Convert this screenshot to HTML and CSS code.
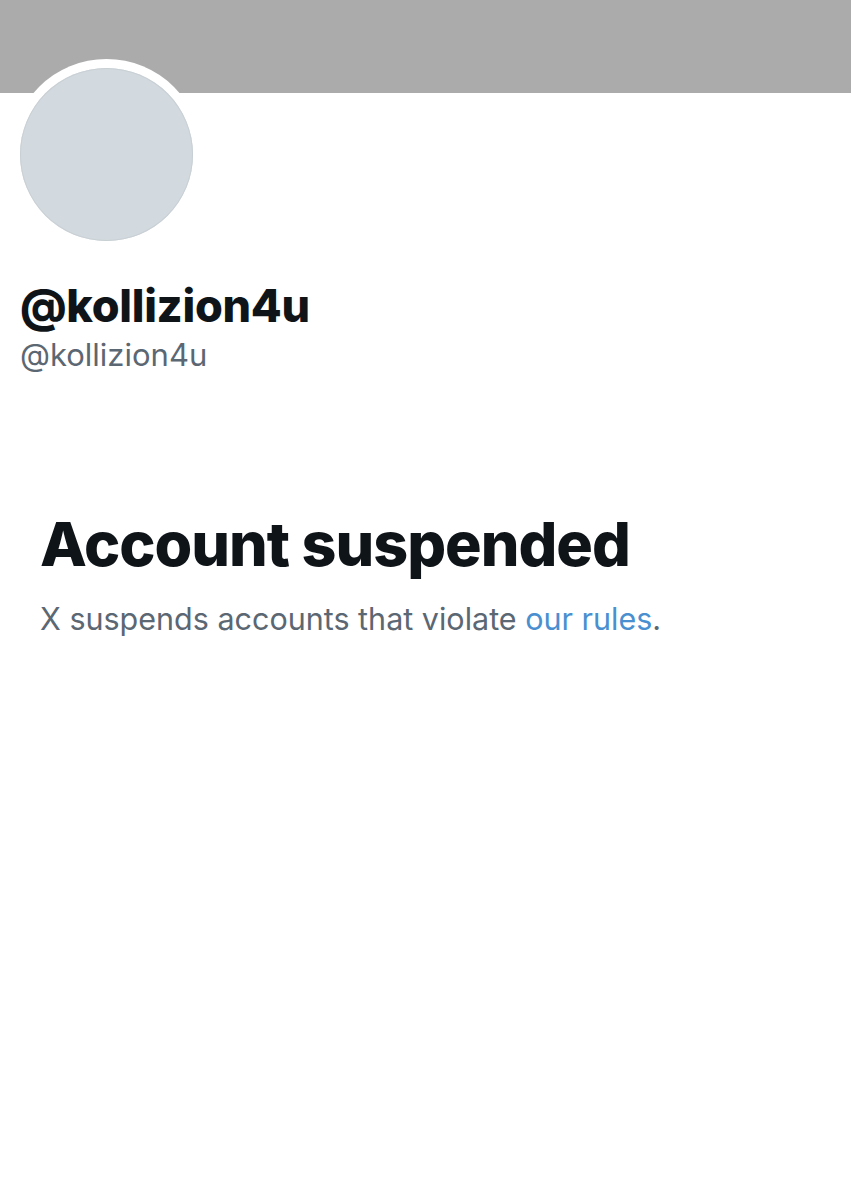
FILE: index.html
```html
<!DOCTYPE html>
<html>
<head>
<meta charset="utf-8">
<link rel="stylesheet" href="styles.css">
</head>
<body>
<div class="page">
  <div class="banner"></div>
  <div class="header">
    <div class="avatar-ring"><div class="avatar"></div></div>
    <div class="name">@kollizion4u</div>
    <div class="handle">@kollizion4u</div>
  </div>
  <div class="notice">
    <div class="title">Account suspended</div>
    <div class="desc">X suspends accounts that violate <a class="link" href="#">our rules</a>.</div>
  </div>
</div>
</body>
</html>
```

FILE: styles.css
```css
html, body { margin: 0; padding: 0; background: #fff; }
.page { width: 851px; height: 1200px; font-family: "Inter", "Liberation Sans", sans-serif; }
.banner { height: 93px; background: #ababab; }
.header { padding: 0 20px; display: flex; flex-direction: column; }
.avatar-ring {
  width: 191px; height: 191px; border-radius: 50%; background: #fff;
  margin-top: -34px; margin-left: -9px;
  display: flex; align-items: center; justify-content: center;
}
.avatar { width: 173px; height: 173px; border-radius: 50%; background: #d3dadf; box-shadow: inset 0 0 0 1px #c9d0d5; }
.name { margin-top: 30px; font-size: 45px; font-weight: 800; color: #0f1419; line-height: 52px; letter-spacing: -0.3px; }
.handle { margin-top: 5px; font-size: 31px; color: #5b6773; line-height: 36px; }
.notice { padding: 135px 40px 0; }
.title { font-size: 61px; font-weight: 800; color: #0f1419; line-height: 72px; letter-spacing: -1px; }
.desc { margin-top: 20px; font-size: 30.5px; color: #5b6773; line-height: 38px; }
.link { color: #4a8fd0; text-decoration: none; }
```
